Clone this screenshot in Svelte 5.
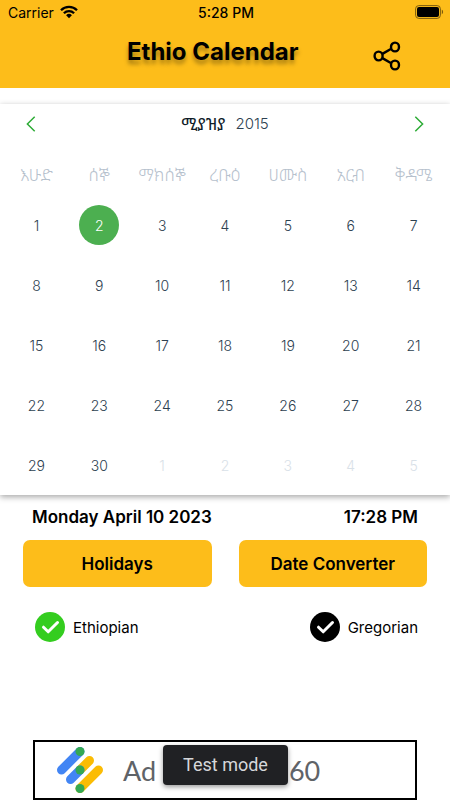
<script lang="ts">
    type Day = { label: number; outside: boolean };

    const weekdays: string[] = ['እሁድ', 'ሰኞ', 'ማክሰኞ', 'ረቡዕ', 'ሀሙስ', 'አርብ', 'ቅዳሜ'];
    const daysInMonth = 30;
    const cells = 35;

    const days: Day[] = Array.from({ length: cells }, (_, i) => ({
        label: i < daysInMonth ? i + 1 : i + 1 - daysInMonth,
        outside: i >= daysInMonth
    }));

    let selected = $state(2);
    let calendarType = $state('ethiopian');
</script>

<div class="app">
    <header>
        <div class="status-bar">
            <div class="carrier">
                <span>Carrier</span>
                <svg width="18" height="14" viewBox="0 0 18 14" aria-hidden="true">
                    <g fill="none" stroke="#000" stroke-width="2.3">
                        <path d="M1 5.2a11.3 11.3 0 0 1 16 0" />
                        <path d="M3.9 8.3a7.2 7.2 0 0 1 10.2 0" />
                    </g>
                    <path d="M9 13.3L6.1 10.3a4.1 4.1 0 0 1 5.8 0z" />
                </svg>
            </div>
            <span class="clock">5:28 PM</span>
            <svg class="battery" width="29" height="14" viewBox="0 0 29 14" aria-hidden="true">
                <rect x="0.6" y="0.6" width="24.8" height="12.8" rx="3.2" fill="none" stroke="#7d5c0e" />
                <rect x="2" y="2" width="22" height="10" rx="2" />
                <path d="M26.8 4.8c1.7 .6 1.7 3.8 0 4.4z" fill="#7d5c0e" />
            </svg>
        </div>
        <div class="title-bar">
            <h1>Ethio Calendar</h1>
            <button class="icon-button" aria-label="Share">
                <svg width="28" height="30" viewBox="0 0 28 30" fill="none" stroke="#000" stroke-width="2.4">
                    <path d="M9.4 12.9L17.8 8M9.4 17.1L17.8 22" />
                    <ellipse cx="5.6" cy="15" rx="4" ry="4.4" />
                    <ellipse cx="22" cy="6" rx="4" ry="4.4" />
                    <ellipse cx="22" cy="24" rx="4" ry="4.4" />
                </svg>
            </button>
        </div>
    </header>

    <main>
        <section class="calendar">
            <div class="month-bar">
                <button class="icon-button" aria-label="Previous month">
                    <svg width="10" height="16" viewBox="0 0 10 16" fill="none" stroke="#2dac36" stroke-width="1.5">
                        <path d="M8.7 .8L1.4 8l7.3 7.2" />
                    </svg>
                </button>
                <div class="month">
                    <span class="month-name">ሚያዝያ</span>
                    <span>2015</span>
                </div>
                <button class="icon-button" aria-label="Next month">
                    <svg width="10" height="16" viewBox="0 0 10 16" fill="none" stroke="#2dac36" stroke-width="1.5">
                        <path d="M1.3 .8L8.6 8l-7.3 7.2" />
                    </svg>
                </button>
            </div>

            <div class="grid weekdays">
                {#each weekdays as name}
                    <span>{name}</span>
                {/each}
            </div>

            <div class="grid days">
                {#each days as day}
                    <button
                        class="day"
                        class:outside={day.outside}
                        class:selected={!day.outside && day.label === selected}
                        disabled={day.outside}
                        onclick={() => (selected = day.label)}
                    >
                        {day.label}
                    </button>
                {/each}
            </div>
        </section>

        <div class="now">
            <span>Monday April 10 2023</span>
            <span>17:28 PM</span>
        </div>

        <div class="actions">
            <button>Holidays</button>
            <button>Date Converter</button>
        </div>

        <div class="types">
            <label>
                <input type="radio" name="type" value="ethiopian" bind:group={calendarType} />
                <svg width="30" height="30" viewBox="0 0 30 30" aria-hidden="true">
                    <circle cx="15" cy="15" r="15" />
                    <path d="M8.5 15.2l4.7 4.6 9.3-9.3" />
                </svg>
                <span>Ethiopian</span>
            </label>
            <label>
                <input type="radio" name="type" value="gregorian" bind:group={calendarType} />
                <svg width="30" height="30" viewBox="0 0 30 30" aria-hidden="true">
                    <circle cx="15" cy="15" r="15" />
                    <path d="M8.5 15.2l4.7 4.6 9.3-9.3" />
                </svg>
                <span>Gregorian</span>
            </label>
        </div>
    </main>

    <aside class="ad">
        <svg width="48" height="48" viewBox="0 0 48 48" stroke-linecap="round" stroke-width="9" aria-hidden="true">
            <path d="M24 5.5L5.5 24" stroke="#4285f4" />
            <path d="M33.5 14.5L24 24" stroke="#fbbc04" />
            <path d="M24 24l-9.5 9.5" stroke="#4285f4" />
            <path d="M42.5 24L24 42.5" stroke="#fbbc04" />
            <g fill="#34a853">
                <circle cx="24" cy="5.5" r="4.5" />
                <circle cx="24" cy="24" r="4.5" />
                <circle cx="24" cy="42.5" r="4.5" />
            </g>
        </svg>
        <span class="ad-text">Ad</span>
        <span class="toast">Test mode</span>
        <span class="ad-text">60</span>
    </aside>
</div>

<style>
    :global(body) {
        margin: 0;
        background: #fff;
    }

    .app {
        display: flex;
        flex-direction: column;
        min-height: 100vh;
        box-sizing: border-box;
        font-family: Inter, "Noto Sans Ethiopic", "Liberation Sans", sans-serif;
        color: #000;
    }

    button {
        padding: 0;
        border: none;
        background: none;
        font: inherit;
        color: inherit;
        cursor: pointer;
    }

    svg {
        display: block;
        flex: none;
    }

    header {
        height: 88px;
        background: #fdbd1a;
    }

    .status-bar {
        display: grid;
        grid-template-columns: 1fr auto 1fr;
        align-items: center;
        height: 24px;
        padding: 0 6px 0 8px;
        font-size: 14px;
    }

    .carrier {
        display: flex;
        align-items: center;
        gap: 6px;
    }

    .clock {
        font-weight: 500;
    }

    .battery {
        justify-self: end;
    }

    .title-bar {
        display: flex;
        align-items: center;
        justify-content: space-between;
        height: 56px;
        padding: 0 49px 0 127px;
    }

    h1 {
        margin: 0;
        font-size: 24px;
        line-height: 28px;
        font-weight: 700;
        white-space: nowrap;
        text-shadow: 0 4px 4px rgba(0, 0, 0, 0.35);
    }

    .title-bar .icon-button {
        padding-top: 8px;
    }

    .calendar {
        margin-top: 16px;
        background: #fff;
        box-shadow: 0 2px 6px rgba(0, 0, 0, 0.35);
    }

    .month-bar {
        display: flex;
        align-items: center;
        justify-content: space-between;
        height: 39px;
        padding: 0 26px;
    }

    .month {
        display: flex;
        align-items: center;
        gap: 10px;
        font-size: 15px;
        font-weight: 300;
        color: #2d4150;
    }

    .month-name {
        font-size: 17px;
        font-weight: 400;
        color: #101c28;
    }

    .grid {
        display: grid;
        grid-template-columns: repeat(7, 1fr);
        padding: 0 5px;
        text-align: center;
    }

    .weekdays {
        align-items: center;
        height: 52px;
        font-size: 17px;
        line-height: 20px;
        font-weight: 300;
        color: #b6c1cd;
    }

    .weekdays span {
        margin-top: 12px;
    }

    .days {
        grid-auto-rows: 60px;
        place-items: center;
    }

    .day {
        width: 40px;
        height: 40px;
        border-radius: 50%;
        font-size: 14px;
        font-weight: 300;
        color: #2d4150;
    }

    .day.outside {
        color: #d9e1e8;
        cursor: default;
    }

    .day.selected {
        background: #4caf50;
        color: #fff;
    }

    .now {
        display: flex;
        justify-content: space-between;
        padding: 12px 32px 0;
        font-size: 17px;
        line-height: 21px;
        font-weight: 600;
    }

    .actions {
        display: grid;
        grid-template-columns: 1fr 1fr;
        gap: 27px;
        padding: 12px 23px 0;
    }

    .actions button {
        height: 47px;
        border-radius: 7px;
        background: #fdbd1a;
        font-size: 17px;
        font-weight: 600;
    }

    .types {
        display: flex;
        justify-content: space-between;
        padding: 25px 32px 0 35px;
        font-size: 15px;
    }

    .types label {
        display: flex;
        align-items: center;
        gap: 8px;
        cursor: pointer;
    }

    .types input {
        position: absolute;
        opacity: 0;
    }

    .types path {
        fill: none;
        stroke: #fff;
        stroke-width: 3;
        stroke-linecap: round;
        stroke-linejoin: round;
    }

    .types input:checked + svg circle {
        fill: #34cd1f;
    }

    .ad {
        display: flex;
        align-items: center;
        height: 60px;
        margin: auto 33px 0;
        padding-left: 21px;
        box-sizing: border-box;
        border: 2px solid #000;
        background: #fff;
    }

    .ad-text {
        font-family: Lato, sans-serif;
        font-size: 27px;
        color: #5f6368;
    }

    .ad svg {
        margin-right: 19px;
    }

    .toast {
        margin: 0 1px 10px 7px;
        padding: 0 20px;
        border-radius: 4px;
        background: #202124;
        box-shadow: 0 2px 5px rgba(0, 0, 0, 0.4);
        font-family: Roboto, sans-serif;
        font-size: 18px;
        line-height: 40px;
        white-space: nowrap;
        color: #d5d7da;
    }
</style>
